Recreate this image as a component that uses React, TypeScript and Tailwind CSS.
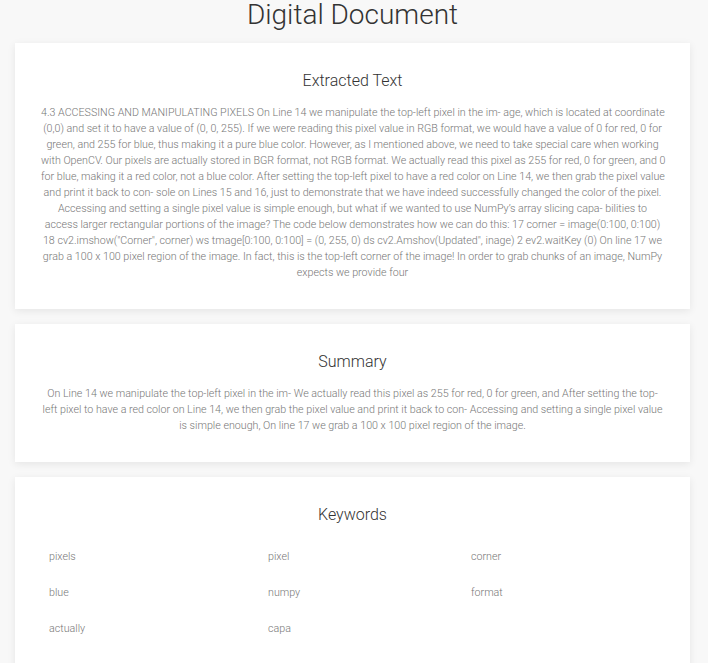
import React from "react";

const extractedLines = [
  "4.3 ACCESSING AND MANIPULATING PIXELS On Line 14 we manipulate the top-left pixel in the im- age, which is located at coordinate",
  "(0,0) and set it to have a value of (0, 0, 255). If we were reading this pixel value in RGB format, we would have a value of 0 for red, 0 for",
  "green, and 255 for blue, thus making it a pure blue color. However, as I mentioned above, we need to take special care when working",
  "with OpenCV. Our pixels are actually stored in BGR format, not RGB format. We actually read this pixel as 255 for red, 0 for green, and 0",
  "for blue, making it a red color, not a blue color. After setting the top-left pixel to have a red color on Line 14, we then grab the pixel value",
  "and print it back to con- sole on Lines 15 and 16, just to demonstrate that we have indeed successfully changed the color of the pixel.",
  "Accessing and setting a single pixel value is simple enough, but what if we wanted to use NumPy\u2019s array slicing capa- bilities to",
  "access larger rectangular portions of the image? The code below demonstrates how we can do this: 17 corner = image(0:100, 0:100)",
  "18 cv2.imshow(\"Corner\", corner) ws tmage[0:100, 0:100] = (0, 255, 0) ds cv2.Amshov(Updated\", inage) 2 ev2.waitKey (0) On line 17 we",
  "grab a 100 x 100 pixel region of the image. In fact, this is the top-left corner of the image! In order to grab chunks of an image, NumPy",
  "expects we provide four",
];

const summaryLines = [
  "On Line 14 we manipulate the top-left pixel in the im- We actually read this pixel as 255 for red, 0 for green, and After setting the top-",
  "left pixel to have a red color on Line 14, we then grab the pixel value and print it back to con- Accessing and setting a single pixel value",
  "is simple enough, On line 17 we grab a 100 x 100 pixel region of the image.",
];

const keywords = [
  ["pixels", "pixel", "corner"],
  ["blue", "numpy", "format"],
  ["actually", "capa", ""],
];

function Card({ title, children }: { title: string; children: React.ReactNode }) {
  return (
    <div className="bg-white shadow-[0_2px_8px_rgba(0,0,0,0.08)] px-[26px] pt-[28px] pb-[28px]">
      <h2 className="text-center text-[16px] leading-[20px] font-light text-[#333]">{title}</h2>
      <div className="mt-[14px]">{children}</div>
    </div>
  );
}

function Para({ lines }: { lines: string[] }) {
  return (
    <p className="text-center text-[10.7px] leading-[16px] font-light text-[#777]">
      {lines.map((l, i) => (
        <span key={i} className="block whitespace-nowrap">
          {l}
        </span>
      ))}
    </p>
  );
}

export default function App() {
  return (
    <div
      className="min-h-screen bg-[#f8f8f8] pl-[15px] pr-[18px] pb-[20px]"
      style={{ fontFamily: "Roboto, 'Noto Sans', sans-serif" }}
    >
      <h1 className="text-center text-[28px] leading-[30px] font-light text-[#333] pt-0 h-[43px]">
        Digital Document
      </h1>
      <div className="flex flex-col gap-[15px]">
        <Card title="Extracted Text">
          <Para lines={extractedLines} />
        </Card>
        <Card title="Summary">
          <Para lines={summaryLines} />
        </Card>
        <Card title="Keywords">
          <div className="grid grid-cols-[219px_203px_1fr] mt-[24px]">
            {keywords.flat().map((k, i) => (
              <div key={i} className="px-[8px] h-[36px] text-[10.7px] leading-[16px] font-light text-[#777]">
                {k}
              </div>
            ))}
          </div>
        </Card>
      </div>
    </div>
  );
}
